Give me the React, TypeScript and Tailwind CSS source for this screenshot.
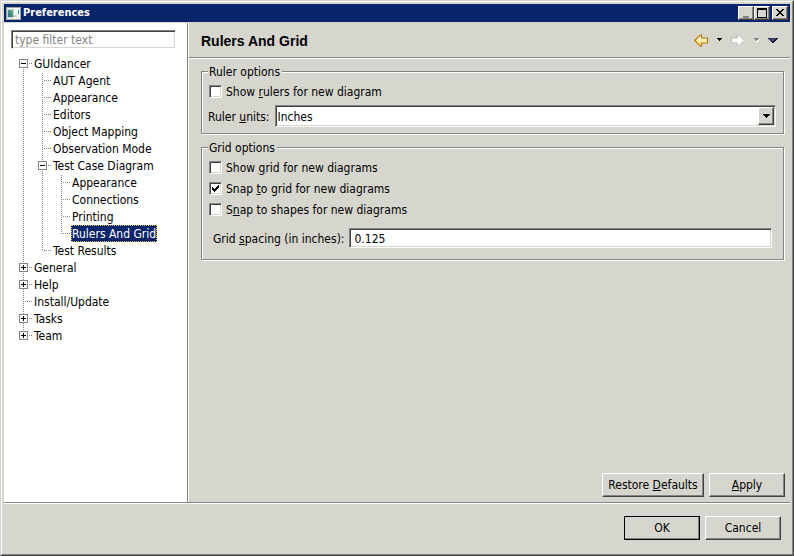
import { useId } from "react";
import type { ReactNode } from "react";

type Item = { label: string; lines: string[]; toggle?: "+" | "-"; selected?: boolean };

// One entry per indentation column: "full", "top" or "bottom" for its vertical guide.
const items: Item[] = [
  { label: "GUIdancer", lines: ["bottom"], toggle: "-" },
  { label: "AUT Agent", lines: ["full", "full"] },
  { label: "Appearance", lines: ["full", "full"] },
  { label: "Editors", lines: ["full", "full"] },
  { label: "Object Mapping", lines: ["full", "full"] },
  { label: "Observation Mode", lines: ["full", "full"] },
  { label: "Test Case Diagram", lines: ["full", "full"], toggle: "-" },
  { label: "Appearance", lines: ["full", "full", "full"] },
  { label: "Connections", lines: ["full", "full", "full"] },
  { label: "Printing", lines: ["full", "full", "full"] },
  { label: "Rulers And Grid", lines: ["full", "full", "top"], selected: true },
  { label: "Test Results", lines: ["full", "top"] },
  { label: "General", lines: ["full"], toggle: "+" },
  { label: "Help", lines: ["full"], toggle: "+" },
  { label: "Install/Update", lines: ["full"] },
  { label: "Tasks", lines: ["full"], toggle: "+" },
  { label: "Team", lines: ["top"], toggle: "+" },
];

const guide: Record<string, string> = { full: "h-[17px]", top: "h-[9px]", bottom: "mt-2 h-[9px]" };

function Guide({ kind, row }: { kind: string; row: number }) {
  return (
    <span
      className={`ml-1 w-px shrink-0 bg-[linear-gradient(#848484_50%,transparent_50%)] bg-[length:1px_2px] ${guide[kind]}`}
      style={{ backgroundPositionY: row % 2 }}
    />
  );
}

function TreeRow({ item, row }: { item: Item; row: number }) {
  const last = item.lines.length - 1;
  return (
    <li role="treeitem" aria-level={last + 1} aria-selected={!!item.selected} className="flex h-[17px]">
      {item.lines.map((kind, i) => (
        <span key={i} className={`relative flex shrink-0 items-start ${i === last ? "w-[14px]" : "w-[19px]"}`}>
          <Guide kind={kind} row={row} />
          {i === last && (
            <span className="mt-2 h-px w-2 bg-[linear-gradient(90deg,transparent_50%,#848484_50%)] bg-[length:2px_1px]" />
          )}
          {i === last && item.toggle && (
            <button
              type="button"
              aria-label={`${item.toggle === "+" ? "Expand" : "Collapse"} ${item.label}`}
              className="absolute top-1 left-0 flex size-[9px] items-center justify-center border border-[#848484] bg-white"
            >
              <svg viewBox="0 0 7 7" className="size-[7px] shrink-0" shapeRendering="crispEdges">
                <path d={item.toggle === "+" ? "M1 3h5v1h-5zM3 1h1v5h-1z" : "M1 3h5v1h-5z"} />
              </svg>
            </button>
          )}
        </span>
      ))}
      <span
        className={`h-[17px] px-px pt-px leading-[17px] whitespace-nowrap ${
          item.selected ? "bg-[#08246b] text-white outline-1 -outline-offset-1 outline-dotted outline-[#d6b94a]" : ""
        }`}
      >
        {item.label}
      </span>
    </li>
  );
}

const sunken =
  "border border-t-[#848484] border-l-[#848484] border-r-white border-b-white shadow-[inset_1px_1px_0_#424142,inset_-1px_-1px_0_#d6d6ce] bg-white";
const raised =
  "border border-t-white border-l-white border-r-[#424142] border-b-[#424142] shadow-[inset_-1px_-1px_0_#848484] bg-[#d6d6ce]";

function Group({ title, children, className }: { title: string; children: ReactNode; className: string }) {
  return (
    <fieldset
      className={`mr-px min-w-0 border border-[#848484] px-[7px] shadow-[1px_1px_0_#fff,inset_1px_1px_0_#fff] ${className}`}
    >
      <legend className="-ml-px h-[15px] bg-[#d6d6ce] pr-[2px] pl-px leading-[17px]">{title}</legend>
      {children}
    </fieldset>
  );
}

function Check({ children, checked = false, className }: { children: ReactNode; checked?: boolean; className: string }) {
  return (
    <label className={`flex items-center gap-1 ${className}`}>
      <span className="relative flex size-[13px] shrink-0">
        <input type="checkbox" defaultChecked={checked} className={`peer size-[13px] appearance-none ${sunken}`} />
        <svg
          viewBox="0 0 7 7"
          className="pointer-events-none absolute top-[3px] left-[3px] hidden size-[7px] peer-checked:block"
          shapeRendering="crispEdges"
        >
          <path d="M0 2h1v1h1v1h1v-1h1v-1h1v-1h1v-1h1v3h-1v1h-1v1h-1v1h-1v1h-1v-1h-1v-1h-1z" />
        </svg>
      </span>
      <span>{children}</span>
    </label>
  );
}

function PushButton({ children, className }: { children: ReactNode; className: string }) {
  return (
    <button type="button" className={`h-6 whitespace-nowrap ${raised} ${className}`}>
      {children}
    </button>
  );
}

function Caption({ label, children, className = "" }: { label: string; children: ReactNode; className?: string }) {
  return (
    <button type="button" aria-label={label} className={`flex h-[14px] w-4 items-center justify-center ${raised} ${className}`}>
      <svg viewBox="0 0 12 10" className="h-[10px] w-3 shrink-0" shapeRendering="crispEdges">
        {children}
      </svg>
    </button>
  );
}

function Triangle({ color, shade, label }: { color: string; shade?: string; label: string }) {
  return (
    <button type="button" aria-label={label} className="flex h-4 w-[6px] items-center">
      <svg viewBox="0 0 6 4" className="h-1 w-[6px]" shapeRendering="crispEdges">
        {shade && <path d="M5 1h1v1h-1v1h-1v1h-2v-1h1v-1h1z" fill={shade} />}
        <path d="M0 0h5v1h-1v1h-1v1h-1v-1h-1v-1h-1z" fill={color} />
      </svg>
    </button>
  );
}

export default function App() {
  const units = useId();
  const spacing = useId();
  return (
    <div className="flex h-screen flex-col border border-t-[#d6d6ce] border-r-[#424142] border-b-[#424142] border-l-[#d6d6ce] bg-[#d6d6ce] font-['DejaVu_Sans_Condensed','DejaVu_Sans',sans-serif] text-[12px] text-black">
      <div className="flex min-h-0 flex-1 flex-col border border-t-white border-r-[#848484] border-b-[#848484] border-l-white pt-[2px] pr-[2px] pl-[2px]">
        <header className="flex h-[18px] shrink-0 items-center bg-[#08246b] pr-[2px] pl-[2px] text-white">
          <svg viewBox="0 0 15 13" className="mr-[2px] h-[13px] w-[15px] shrink-0" shapeRendering="crispEdges">
            <defs>
              <linearGradient id="screen" x1="0" y1="1" x2="1" y2="0">
                <stop offset="0" stopColor="#2f6f9c" />
                <stop offset="0.5" stopColor="#3f8f7c" />
                <stop offset="1" stopColor="#7cc08c" />
              </linearGradient>
            </defs>
            <path fill="#a5a5a0" d="M0 0h15v13h-15z" />
            <path fill="#f4f6f6" d="M1 1h13v11h-13z" />
            <path fill="#c3d3dc" d="M1 2h7v9h-7z" />
            <path fill="url(#screen)" d="M2 3h5v7h-5z" />
            <path fill="#c9d0d0" d="M8 8h3v2h-3z" />
            <path fill="#2a8fa5" d="M12 3h1v4h-1z" />
          </svg>
          <h1 className="flex-1 text-[11px] font-bold">Preferences</h1>
          <Caption label="Minimize">
            <path d="M4 9h6v2h-6z" fill="#fff" />
            <path d="M3 8h6v2h-6z" fill="#848484" />
          </Caption>
          <Caption label="Maximize">
            <path d="M1 0h10v10h-10zM2 2v7h8v-7z" fillRule="evenodd" />
          </Caption>
          <Caption label="Close" className="ml-[2px]">
            <path d="M2 1h2v1h1v1h2v-1h1v-1h2v1h-1v1h-1v1h-1v1h1v1h1v1h1v1h-2v-1h-1v-1h-2v1h-1v1h-2v-1h1v-1h1v-1h1v-1h-1v-1h-1v-1h-1z" />
          </Caption>
        </header>

        <div className="flex min-h-0 flex-1 border-b border-[#848484] pt-px">
          <aside className="w-[184px] shrink-0 border-r border-[#848484] bg-white pt-[7px] pl-[7px]">
            <input
              type="text"
              aria-label="Filter preferences"
              placeholder="type filter text"
              className={`block h-[19px] w-[165px] px-[3px] pt-px outline-none placeholder:text-[#848484] ${sunken}`}
            />
            <ul role="tree" className="mt-[6px] ml-2">
              {items.map((item, row) => (
                <TreeRow key={row} item={item} row={row} />
              ))}
            </ul>
          </aside>

          <main className="flex min-w-0 flex-1 flex-col border-l border-white">
            <div className="flex h-[35px] shrink-0 items-center border-b border-[#848484] pr-3 pl-3 shadow-[0_1px_0_#fff]">
              <h2 className="flex-1 pt-[2px] font-['Liberation_Sans',Arial,sans-serif] text-[14px] font-bold">
                Rulers And Grid
              </h2>
              <button type="button" aria-label="Back" className="mr-2">
                <svg viewBox="0 0 15 13" className="h-[13px] w-[15px]">
                  <defs>
                    <linearGradient id="gold" x1="0" y1="0" x2="0" y2="1">
                      <stop offset="0" stopColor="#fffbe0" />
                      <stop offset="1" stopColor="#ffe37a" />
                    </linearGradient>
                  </defs>
                  <path
                    d="M.8 6.5 6 1.2h1.5v2.8h6v5h-6v2.8H6z"
                    fill="url(#gold)"
                    stroke="#b8780c"
                    strokeWidth="1.2"
                  />
                </svg>
              </button>
              <Triangle color="#000" label="Back history" />
              <button type="button" aria-label="Forward" className="mr-[9px] ml-[7px]">
                <svg viewBox="0 0 15 13" className="h-[13px] w-[15px]">
                  <path d="M14.2 6.5 9 1.2H7.5v2.8h-6v5h6v2.8H9z" fill="#fafaf8" stroke="#c0c0ba" />
                </svg>
              </button>
              <Triangle color="#848484" shade="#fff" label="Forward history" />
              <button type="button" aria-label="View menu" className="ml-2">
                <svg viewBox="0 0 10 5" className="h-[5px] w-[10px]" shapeRendering="crispEdges">
                  <path d="M0 0h10v1h-1v1h-1v1h-1v1h-1v1h-2v-1h-1v-1h-1v-1h-1v-1h-1z" fill="#181830" />
                  <path d="M1 0h7v1h-1v1h-1v1h-1v1h-1v-1h-1v-1h-1v-1h-1z" fill="#42427b" />
                </svg>
              </button>
            </div>

            <div className="flex flex-1 flex-col pt-[6px] pr-[5px] pb-[5px] pl-3">
              <Group title="Ruler options" className="pb-[6px]">
                <Check className="mt-1 h-[17px]">
                  Show <u>r</u>ulers for new diagram
                </Check>
                <div className="mt-[5px] flex items-center">
                  <label htmlFor={units} className="mr-[5px] -ml-px pt-px">
                    Ruler <u>u</u>nits:
                  </label>
                  <div className="relative flex-1">
                    <select id={units} className={`block h-[22px] w-full appearance-none pt-px pl-[2px] outline-none ${sunken}`}>
                      <option>Inches</option>
                      <option>Centimeters</option>
                      <option>Pixels</option>
                    </select>
                    <span
                      className={`pointer-events-none absolute top-[2px] right-[2px] flex h-[18px] w-4 items-center justify-center ${raised}`}
                    >
                      <svg viewBox="0 0 7 4" className="h-1 w-[7px]" shapeRendering="crispEdges">
                        <path d="M0 0h7v1h-1v1h-1v1h-1v1h-1v-1h-1v-1h-1v-1h-1z" />
                      </svg>
                    </span>
                  </div>
                </div>
              </Group>

              <Group title="Grid options" className="mt-[6px] pb-[11px]">
                <Check className="mt-[2px] h-[21px]">
                  Show <u>g</u>rid for new diagrams
                </Check>
                <Check checked className="h-[21px]">
                  Snap <u>t</u>o grid for new diagrams
                </Check>
                <Check className="h-[21px]">
                  S<u>n</u>ap to shapes for new diagrams
                </Check>
                <div className="mt-2 flex items-center pr-1 pl-1">
                  <label htmlFor={spacing} className="mr-[5px] pt-px">
                    Grid <u>s</u>pacing (in inches):
                  </label>
                  <input
                    id={spacing}
                    type="text"
                    defaultValue="0.125"
                    className={`h-5 min-w-0 flex-1 px-1 pt-px outline-none ${sunken}`}
                  />
                </div>
              </Group>

              <div className="mt-auto flex justify-end gap-[5px]">
                <PushButton className="w-[102px]">
                  Restore <u>D</u>efaults
                </PushButton>
                <PushButton className="w-[76px]">
                  <u>A</u>pply
                </PushButton>
              </div>
            </div>
          </main>
        </div>

        <footer className="flex shrink-0 justify-end gap-[5px] border-t border-white pt-3 pr-[9px] pb-[14px]">
          <PushButton className="w-[76px] outline-1 -outline-offset-1 outline-black">OK</PushButton>
          <PushButton className="w-[76px]">Cancel</PushButton>
        </footer>
      </div>
    </div>
  );
}
